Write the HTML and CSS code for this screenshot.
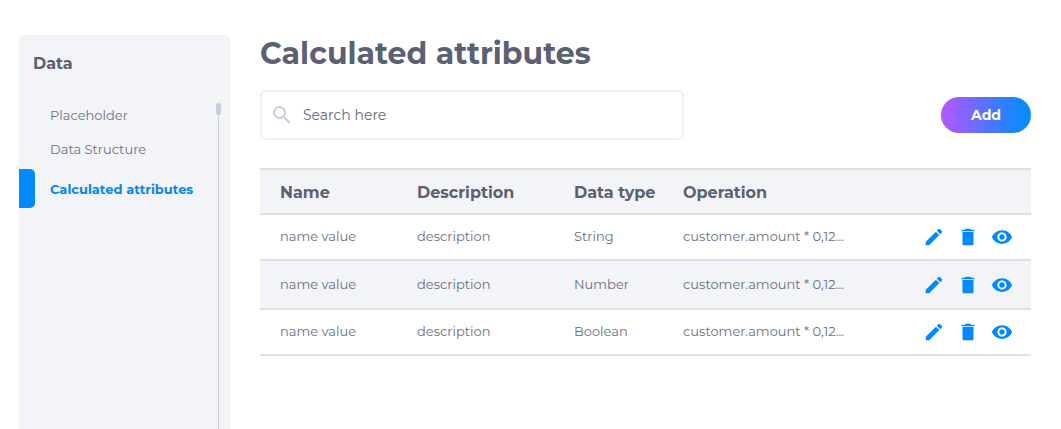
FILE: index.html
```html
<!DOCTYPE html>
<html lang="en">
<head>
<meta charset="utf-8">
<meta name="viewport" content="width=device-width, initial-scale=1">
<title>Calculated attributes</title>
<link rel="stylesheet" href="styles.css">
</head>
<body>
<svg width="0" height="0" class="sprite" aria-hidden="true">
  <symbol id="edit" viewBox="0 0 24 24"><path d="M3 17.25V21h3.75L17.81 9.94l-3.75-3.75L3 17.25zM20.71 7.04a1 1 0 0 0 0-1.41l-2.34-2.34a1 1 0 0 0-1.41 0l-1.83 1.83 3.75 3.75 1.83-1.83z"/></symbol>
  <symbol id="trash" viewBox="0 0 24 24"><path d="M6 19.500c0 .8.700 1.500 1.500 1.500h9c.8 0 1.500-.7 1.500-1.500V6.600H6v12.900zM19 4h-3.500l-1-1h-5l-1 1H5v1.700h14V4z"/></symbol>
  <symbol id="eye" viewBox="0 0 24 24"><path d="M12 4.500C7 4.500 2.730 7.610 1 12c1.730 4.390 6 7.500 11 7.500s9.270-3.110 11-7.500c-1.730-4.390-6-7.500-11-7.500zM12 17c-2.760 0-5-2.240-5-5s2.240-5 5-5 5 2.240 5 5-2.240 5-5 5zm0-8c-1.660 0-3 1.340-3 3s1.340 3 3 3 3-1.340 3-3-1.340-3-3-3z"/></symbol>
</svg>
<div class="page">
  <aside class="sidebar">
    <h2 class="sidebar-title">Data</h2>
    <div class="sidebar-body">
      <nav class="nav">
        <a class="nav-link" href="#">Placeholder</a>
        <a class="nav-link" href="#">Data Structure</a>
        <a class="nav-link active" href="#" aria-current="page">Calculated attributes</a>
      </nav>
      <div class="scroll-track"><div class="scroll-thumb"></div></div>
    </div>
  </aside>
  <main class="main">
    <h1 class="title">Calculated attributes</h1>
    <div class="toolbar">
      <label class="search">
        <svg class="search-icon" viewBox="0 0 24 24" aria-hidden="true"><path d="M15.500 14h-.79l-.28-.27A6.470 6.470 0 0 0 16 9.500 6.500 6.500 0 1 0 9.500 16c1.610 0 3.090-.59 4.230-1.570l.27.28v.79l5 4.990L20.490 19l-4.990-5zm-6 0C7.010 14 5 11.990 5 9.500S7.010 5 9.500 5 14 7.010 14 9.500 11.990 14 9.500 14z"/></svg>
        <input class="search-input" type="text" placeholder="Search here" aria-label="Search here">
      </label>
      <button class="add" type="button">Add</button>
    </div>
    <table class="table">
      <colgroup><col class="col-name"><col class="col-description"><col class="col-type"><col></colgroup>
      <thead>
        <tr><th>Name</th><th>Description</th><th>Data type</th><th colspan="2">Operation</th></tr>
      </thead>
      <tbody>
        <tr>
          <td>name value</td><td>description</td><td>String</td><td>customer.amount * 0,12...</td>
          <td class="actions-cell"><div class="actions">
            <button class="action" type="button" aria-label="Edit"><svg class="icon"><use href="#edit"/></svg></button>
            <button class="action" type="button" aria-label="Delete"><svg class="icon"><use href="#trash"/></svg></button>
            <button class="action" type="button" aria-label="View"><svg class="icon"><use href="#eye"/></svg></button>
          </div></td>
        </tr>
        <tr>
          <td>name value</td><td>description</td><td>Number</td><td>customer.amount * 0,12...</td>
          <td class="actions-cell"><div class="actions">
            <button class="action" type="button" aria-label="Edit"><svg class="icon"><use href="#edit"/></svg></button>
            <button class="action" type="button" aria-label="Delete"><svg class="icon"><use href="#trash"/></svg></button>
            <button class="action" type="button" aria-label="View"><svg class="icon"><use href="#eye"/></svg></button>
          </div></td>
        </tr>
        <tr>
          <td>name value</td><td>description</td><td>Boolean</td><td>customer.amount * 0,12...</td>
          <td class="actions-cell"><div class="actions">
            <button class="action" type="button" aria-label="Edit"><svg class="icon"><use href="#edit"/></svg></button>
            <button class="action" type="button" aria-label="Delete"><svg class="icon"><use href="#trash"/></svg></button>
            <button class="action" type="button" aria-label="View"><svg class="icon"><use href="#eye"/></svg></button>
          </div></td>
        </tr>
      </tbody>
    </table>
  </main>
</div>
</body>
</html>
```
FILE: styles.css
```css
* { box-sizing: border-box; }

body {
  margin: 0;
  background: #fff;
  color: #6a6f7e;
  font-family: Montserrat, Inter, sans-serif;
  font-size: 13px;
  line-height: 20px;
}

.sprite { display: none; }

.page {
  display: flex;
  gap: 30px;
  min-height: 100vh;
  padding: 35px 30px 0 19px;
}

.sidebar {
  display: flex;
  flex-direction: column;
  flex: 0 0 211px;
  background: #f2f4f8;
  border-radius: 5px 5px 0 0;
}

.sidebar-title {
  margin: 0;
  padding: 18px 14px 0;
  color: #5c6073;
  font-size: 16px;
  line-height: 22px;
}

.sidebar-body {
  display: flex;
  flex: 1;
  padding: 23px 9px 0 0;
}

.nav {
  display: flex;
  flex: 1;
  flex-direction: column;
}

.nav-link {
  display: flex;
  align-items: center;
  height: 34px;
  padding-left: 31px;
  color: #6e7281;
  text-decoration: none;
  white-space: nowrap;
}

.nav-link.active {
  gap: 15px;
  height: 39px;
  margin-top: 3px;
  padding-left: 0;
  color: #0a84ee;
  font-weight: 700;
  line-height: 16px;
}

.nav-link.active::before {
  content: "";
  width: 16px;
  height: 39px;
  background: #018aff;
  border-radius: 0 5px 5px 0;
}

.scroll-track {
  width: 5px;
  margin-top: 5px;
  background: linear-gradient(#c9cade, #c9cade) center / 1px 100% no-repeat;
}

.scroll-thumb {
  height: 12px;
  background: #c9cade;
  border-radius: 2px;
}

.main {
  flex: 1;
  min-width: 0;
}

.title {
  margin: 0;
  color: #5c6073;
  font-size: 30px;
  line-height: 38px;
}

.toolbar {
  display: flex;
  align-items: center;
  justify-content: space-between;
  margin-top: 17px;
}

.search {
  display: flex;
  align-items: center;
  gap: 9px;
  width: 55%;
  height: 50px;
  padding: 0 8px;
  border: 2px solid #f2f2f4;
  border-radius: 5px;
}

.search-icon {
  flex: none;
  width: 24px;
  height: 24px;
  fill: #cbccda;
}

.search-input {
  flex: 1;
  min-width: 0;
  padding: 0;
  border: 0;
  outline: 0;
  background: none;
  color: #666976;
  font: inherit;
  font-size: 14px;
}

.search-input::placeholder {
  color: #666976;
  opacity: 1;
}

.add {
  width: 90px;
  height: 36px;
  padding: 0;
  border: 0;
  border-radius: 18px;
  background: linear-gradient(90deg, #b656ff, #0a8aff 90%);
  color: #fff;
  font: inherit;
  font-size: 14px;
  font-weight: 700;
}

.table {
  width: 100%;
  margin-top: 28px;
  border-spacing: 0;
  border-top: 2px solid #dfe0e6;
}

.col-name { width: 137px; }
.col-description { width: 157px; }
.col-type { width: 109px; }

.table th,
.table td {
  height: 46px;
  padding: 0 0 2px 20px;
  border-bottom: 2px solid #dfe0e6;
  text-align: left;
  white-space: nowrap;
}

.table th {
  height: 45px;
  padding: 2px 0 0 20px;
  background: #f2f4f8;
  color: #5c6073;
  font-size: 16px;
}

.table tr:nth-child(even) td {
  height: 49px;
  background: #f2f4f8;
}

.table .actions-cell { padding-bottom: 0; }

.actions {
  display: flex;
  justify-content: flex-end;
  gap: 12px;
  padding-right: 18px;
}

.action {
  display: flex;
  padding: 0;
  border: 0;
  background: none;
  color: #018aff;
}

.icon {
  width: 22px;
  height: 22px;
  fill: currentColor;
}
```
